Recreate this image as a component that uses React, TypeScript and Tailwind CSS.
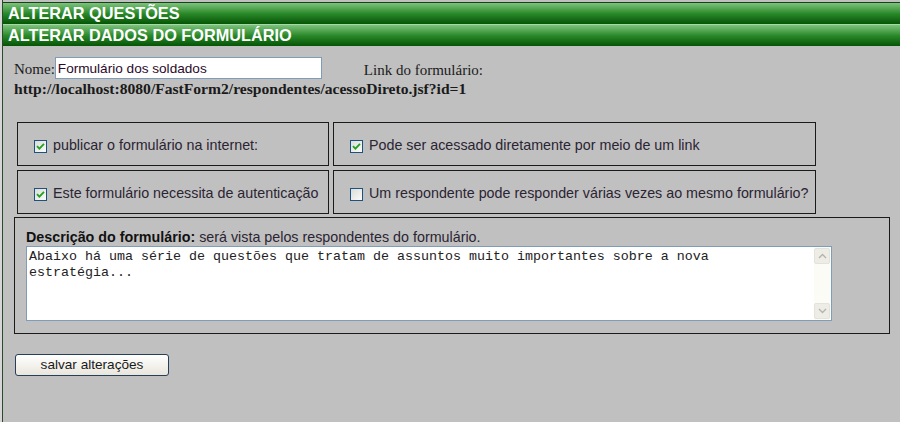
import type { ReactNode } from 'react';

const serif = 'font-["Liberation_Serif","Times_New_Roman",serif]';

function Bar({ title, top }: { title: string; top?: boolean }) {
  return (
    <div
      className={`flex h-[22px] items-center bg-linear-to-b from-[#7cc47c] via-[#2a8a2a] to-[#045504] pl-[5px] text-[16.3px] font-bold text-white ${
        top ? 'border-t border-[#1d3d1d]' : 'border-t border-[#a8d8a8]'
      }`}
    >
      {title}
    </div>
  );
}

function Check({ checked }: { checked: boolean }) {
  return (
    <span className="flex h-[13px] w-[13px] shrink-0 items-center justify-center border border-[#1c5180] bg-linear-to-br from-[#dcdcd7] to-[#fbfbf9]">
      {checked && (
        <svg width="9" height="9" viewBox="0 0 9 9">
          <path d="M1 4.2 L3.4 6.6 L8 1.8" fill="none" stroke="#21a121" strokeWidth="1.8" />
        </svg>
      )}
    </span>
  );
}

function Option({ checked, children }: { checked: boolean; children: ReactNode }) {
  return (
    <div className="flex h-[44px] items-center gap-[6px] border border-[#1a1a1a] pl-[16px] pt-[4px] text-[14.3px] text-[#2b2433]">
      <Check checked={checked} />
      <span>{children}</span>
    </div>
  );
}

function Chevron({ up }: { up?: boolean }) {
  return (
    <div className="flex h-[16px] w-[16px] items-center justify-center rounded-[2px] border border-[#e4e2da] bg-[#eeede5]">
      <svg width="9" height="6" viewBox="0 0 9 6">
        <path
          d={up ? 'M1 5 L4.5 1.5 L8 5' : 'M1 1 L4.5 4.5 L8 1'}
          fill="none"
          stroke="#b4b3ad"
          strokeWidth="1.4"
        />
      </svg>
    </div>
  );
}

export default function App() {
  return (
    <div className="min-h-[422px] w-[900px] bg-[#d6d6d6] pl-[2px] font-['Liberation_Sans',Arial,sans-serif]">
      <div className="min-h-[422px] border-l border-[#2b4a2b] bg-[#c0c0c0] pt-[2px]">
        <Bar title="ALTERAR QUESTÕES" top />
        <Bar title="ALTERAR DADOS DO FORMULÁRIO" />

        <div className="pl-[11px] pt-[11px]">
          <div className={`flex h-[22px] items-center ${serif} text-[15px] leading-[17px] text-[#1a1a1a]`}>
            <span className="pt-[2px]">Nome:</span>
            <div className="flex h-[22px] w-[267px] items-center border border-[#7f9db9] bg-white pl-[2px] font-['Liberation_Sans',Arial,sans-serif] text-[13.6px] text-[#2a0a2a]">
              Formulário dos soldados
            </div>
            <span className="ml-[42px] pt-[4px]">Link do formulário:</span>
          </div>
          <div className={`${serif} mt-[1px] text-[15.6px] font-bold leading-[18px] text-[#1a1a1a]`}>
            http://localhost:8080/FastForm2/respondentes/acessoDireto.jsf?id=1
          </div>

          <div className="ml-[3px] mt-[24px] grid w-[799px] grid-cols-[312px_483px] gap-[4px]">
            <Option checked>publicar o formulário na internet:</Option>
            <Option checked>Pode ser acessado diretamente por meio de um link</Option>
            <Option checked>Este formulário necessita de autenticação</Option>
            <Option checked={false}>Um respondente pode responder várias vezes ao mesmo formulário?</Option>
          </div>

          <div className="mt-[3px] w-[876px] border border-[#1a1a1a] px-[11px] pb-[12px] pt-[11px]">
            <div className="text-[14.3px] leading-[16px] text-[#2b2433]">
              <b className="text-[#111]">Descrição do formulário:</b> será vista pelos respondentes do formulário.
            </div>
            <div className="mt-[1px] flex h-[75px] w-[806px] border border-[#7f9db9] bg-white">
              <div className="flex-1 px-[2px] pt-[2px] font-['Liberation_Mono','Courier_New',monospace] text-[13.33px] leading-[16px] text-[#222]">
                Abaixo há uma série de questões que tratam de assuntos muito importantes sobre a nova
                <br />
                estratégia...
              </div>
              <div className="flex w-[17px] flex-col justify-between bg-[#fcfcf6] py-[1px]">
                <Chevron up />
                <Chevron />
              </div>
            </div>
          </div>

          <button className="mt-[20px] ml-[1px] h-[22px] w-[154px] rounded-[3px] border border-[#27405a] bg-linear-to-b from-white to-[#e8e6dc] text-[13.6px] text-[#1a1a1a]">
            salvar alterações
          </button>
        </div>
      </div>
    </div>
  );
}
